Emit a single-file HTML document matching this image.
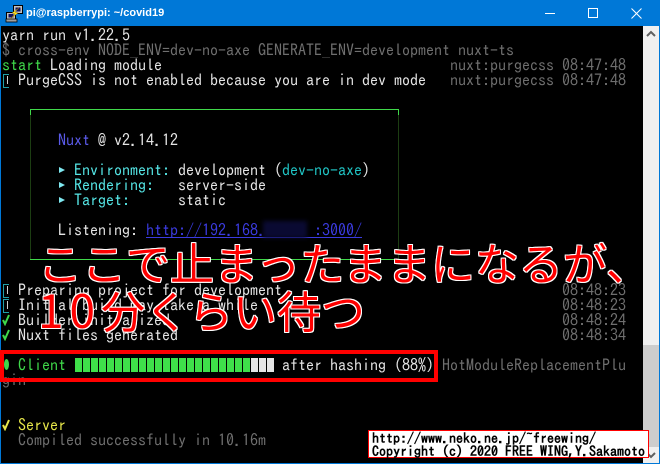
<!DOCTYPE html>
<html lang="ja">
<head>
<meta charset="utf-8">
<style>
html,body{margin:0;padding:0;background:#000}
#w{position:relative;width:660px;height:464px;overflow:hidden;background:#000}
.a{position:absolute}
pre{position:absolute;left:2px;top:28px;margin:0;font:16px/15px "IPAGothic","Liberation Mono",monospace;color:#e5e5e5;white-space:pre}
.d{color:#6f6f6f}.g{color:#3fd94a}.y{color:#e8e84a}.c{color:#55e6e6}.b{color:#5a5ae8}.t{color:#20c5c5}.u{color:#3b3be0;text-decoration:underline}
#title{left:26px;top:3px;font:bold 11px/20px "Liberation Sans","Noto Sans CJK JP",sans-serif;color:#fff;white-space:pre}
.ov{position:absolute;font:400 44px/50px "Noto Sans CJK JP",sans-serif;color:#f00;white-space:pre;
text-shadow:1px 0 #fff,-1px 0 #fff,0 1px #fff,0 -1px #fff,1px 1px #fff,-1px -1px #fff,1px -1px #fff,-1px 1px #fff}
.wm{position:absolute;left:372px;font:bold 14px/14px "IPAGothic","Liberation Mono",monospace;color:#000;white-space:pre}
.ib{position:absolute;left:3px;width:5px;height:12px;border:1px solid #1fa0a8;border-right:0}
.ii{position:absolute;left:7px;width:1px;height:8px;background:#cfcfcf}
.tri{position:absolute;left:59px;width:0;height:0;border-left:6px solid #7fe8f0;border-top:3px solid transparent;border-bottom:3px solid transparent}
</style>
</head>
<body>
<div id="w">
<!-- window frame -->
<div class="a" style="left:0;top:0;width:660px;height:26px;background:#0078d7"></div>
<div class="a" style="left:0;top:26px;width:1px;height:438px;background:#0078d7"></div>
<div class="a" style="left:0;top:463px;width:660px;height:1px;background:#0078d7"></div>
<div class="a" style="left:659px;top:26px;width:1px;height:438px;background:#0078d7"></div>
<!-- titlebar icon -->
<svg class="a" style="left:5px;top:4px" width="20" height="19" viewBox="0 0 20 19">
<rect x="8.5" y="1.5" width="9" height="8" fill="#c0c0c0" stroke="#000"/>
<rect x="10.5" y="3.5" width="5" height="4" fill="#101060"/>
<rect x="1.5" y="8.5" width="9" height="7" fill="#c0c0c0" stroke="#000"/>
<rect x="3.5" y="10" width="5" height="3.5" fill="#101060"/>
<rect x="1" y="15" width="11" height="3" fill="#a0a0a0" stroke="#000" stroke-width=".8"/>
<path d="M15 3 L7 9 L10 10 L5 15 L13 9 L10 8 Z" fill="#ffe820" stroke="#806000" stroke-width=".4"/>
</svg>
<div id="title" class="a">pi@raspberrypi: ~/covid19</div>
<!-- window buttons -->
<div class="a" style="left:545px;top:13px;width:10px;height:1px;background:#fff"></div>
<div class="a" style="left:588px;top:8px;width:8px;height:8px;border:1px solid #fff"></div>
<svg class="a" style="left:631px;top:8px" width="11" height="11" viewBox="0 0 11 11"><path d="M.5 .5 L10.5 10.5 M10.5 .5 L.5 10.5" stroke="#fff" stroke-width="1" fill="none"/></svg>
<!-- scrollbar -->
<div class="a" style="left:643px;top:26px;width:16px;height:437px;background:#f0f0f0"></div>
<div class="a" style="left:643px;top:345px;width:16px;height:102px;background:#cdcdcd"></div>
<svg class="a" style="left:646px;top:30px" width="10" height="8" viewBox="0 0 10 8"><path d="M1 6 L5 2 L9 6" stroke="#606060" stroke-width="2" fill="none"/></svg>
<svg class="a" style="left:646px;top:451px" width="10" height="8" viewBox="0 0 10 8"><path d="M1 2 L5 6 L9 2" stroke="#606060" stroke-width="2" fill="none"/></svg>

<pre>yarn run v1.22.5
<span class="d">$ cross-env NODE_ENV=dev-no-axe GENERATE_ENV=development nuxt-ts</span>
<span class="g">start</span> Loading module                                    <span class="d">nuxt:purgecss 08:47:48</span>
  PurgeCSS is not enabled because you are in dev mode   <span class="d">nuxt:purgecss 08:47:48</span>



       <span class="b">Nuxt</span> @ v2.14.12

         <span class="c">Environment:</span> development (<span class="t">dev-no-axe</span>)
         <span class="c">Rendering:</span>   server-side
         <span class="c">Target:</span>      static

       Listening: <span class="u">http://192.168.      :3000/</span>



  Preparing project for development                                   <span class="d">08:48:23</span>
  Initial build may take a while                                      <span class="d">08:48:23</span>
  Builder initialized                                                 <span class="d">08:48:24</span>
  Nuxt files generated                                                <span class="d">08:48:34</span>

  <span class="g">Client</span>                           after hashing (88%) <span class="d">HotModuleReplacementPlu</span>
<span class="d">gin</span>


  <span class="y">Server</span>
  <span class="d">Compiled successfully in 10.16m</span></pre>

<!-- info markers -->
<div class="ib" style="top:74px"></div><div class="ii" style="top:76px"></div>
<div class="ib" style="top:284px"></div><div class="ii" style="top:286px"></div>
<div class="ib" style="top:299px"></div><div class="ii" style="top:301px"></div>
<!-- checks -->
<svg class="a" style="left:2px;top:314px" width="8" height="12" viewBox="0 0 8 12"><path d="M1 6 L3 10 L7 1" stroke="#3fd94a" stroke-width="2" fill="none"/></svg>
<svg class="a" style="left:2px;top:329px" width="8" height="12" viewBox="0 0 8 12"><path d="M1 6 L3 10 L7 1" stroke="#3fd94a" stroke-width="2" fill="none"/></svg>
<svg class="a" style="left:2px;top:419px" width="8" height="12" viewBox="0 0 8 12"><path d="M1 6 L3 10 L7 1" stroke="#e8e84a" stroke-width="2" fill="none"/></svg>
<!-- nuxt box -->
<div class="a" style="left:30px;top:109px;width:369px;height:1px;background:#3fd94a"></div>
<div class="a" style="left:30px;top:259px;width:369px;height:1px;background:#3fd94a"></div>
<div class="a" style="left:30px;top:110px;width:1px;height:149px;background:#1c3d12"></div>
<div class="a" style="left:398px;top:110px;width:1px;height:149px;background:#1c3d12"></div>
<div class="a" style="left:30px;top:110px;width:1px;height:5px;background:#3fd94a"></div>
<div class="a" style="left:398px;top:110px;width:1px;height:5px;background:#3fd94a"></div>
<!-- bullets -->
<div class="tri" style="top:167px"></div>
<div class="tri" style="top:182px"></div>
<div class="tri" style="top:197px"></div>
<!-- blur on IP -->
<div class="a" style="left:263px;top:221px;width:44px;height:17px;background:#0a0a32;filter:blur(2px)"></div>
<!-- client dot -->
<div class="a" style="left:4px;top:359px;width:5px;height:11px;border-radius:50%;background:#3fd94a"></div>
<!-- progress -->
<div class="a" style="left:75px;top:358px;width:176px;height:14px;background:repeating-linear-gradient(90deg,#3fe04a 0 7px,#000 7px 8px)"></div>
<div class="a" style="left:251px;top:358px;width:24px;height:14px;background:repeating-linear-gradient(90deg,#e5e5e5 0 7px,#000 7px 8px)"></div>
<!-- red box -->
<div class="a" style="left:0;top:350px;width:430px;height:24px;border:4px solid #f00"></div>
<!-- overlays -->
<div class="ov" style="left:38px;top:236px">ここで止まったままになるが、</div>
<div class="ov" style="left:38px;top:284px"><span style="font-size:46px;letter-spacing:6px">10</span>分くらい待つ</div>
<!-- watermark -->
<div class="a" style="left:368px;top:430px;width:279px;height:26px;background:#fff;border:1px solid #f00"></div>
<div class="wm" style="top:431px">http://www.neko.ne.jp/~freewing/</div>
<div class="wm" style="top:444px">Copyright (c) 2020 FREE WING,Y.Sakamoto</div>
</div>
</body>
</html>
